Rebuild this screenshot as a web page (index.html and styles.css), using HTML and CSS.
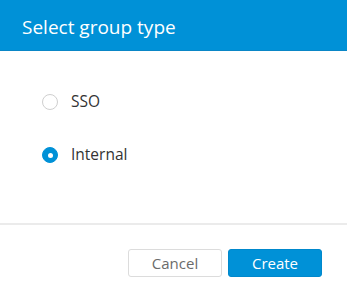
FILE: index.html
```html
<!DOCTYPE html>
<html>
  <head>
    <title>Select group type</title>
    <link rel="stylesheet" href="styles.css">
  </head>
  <body>
    <div class="dialog">
      <div class="header">
        <h1>Select group type</h1>
      </div>
      <div class="options">
        <label class="option">
          <span class="radio"></span>
          <span class="label">SSO</span>
        </label>
        <label class="option">
          <span class="radio checked"></span>
          <span class="label">Internal</span>
        </label>
      </div>
      <div class="footer">
        <button class="cancel">Cancel</button>
        <button class="create">Create</button>
      </div>
    </div>
  </body>
</html>
```

FILE: styles.css
```css
* {
  box-sizing: border-box;
  margin: 0;
  padding: 0;
}

body {
  width: 347px;
  height: 295px;
  background: #fff;
  font-family: "Open Sans", "Noto Sans", sans-serif;
  color: #333;
}

.dialog {
  display: flex;
  flex-direction: column;
  height: 100%;
}

.header {
  height: 51px;
  background: #0091d7;
  border-bottom: 1px solid #0a86c6;
  display: flex;
  align-items: center;
  padding-left: 22px;
}

.header h1 {
  color: #fff;
  font-size: 19px;
  font-weight: 400;
  padding-top: 3px;
}

.options {
  height: 174px;
  border-bottom: 2px solid #ebebeb;
  padding: 43px 0 0 42px;
  display: flex;
  flex-direction: column;
  gap: 37px;
}

.option {
  display: flex;
  align-items: center;
  gap: 13px;
  height: 16px;
}

.radio {
  width: 16px;
  height: 16px;
  border-radius: 50%;
  border: 1.5px solid #cfcfcf;
  display: flex;
  align-items: center;
  justify-content: center;
}

.radio.checked {
  background: #0091d7;
  border-color: #0091d7;
}

.radio.checked::after {
  content: "";
  width: 5px;
  height: 5px;
  border-radius: 50%;
  background: #fff;
}

.label {
  font-size: 15.5px;
  color: #333;
  padding-bottom: 3px;
}

.footer {
  display: flex;
  justify-content: flex-end;
  gap: 6px;
  padding: 24px 25px 0 0;
}

button {
  width: 94px;
  height: 28px;
  border-radius: 3px;
  font-family: "Open Sans", "Noto Sans", sans-serif;
  font-size: 15px;
  padding-bottom: 1px;
}

.cancel {
  background: #fff;
  border: 1px solid #dcdcdc;
  color: #6b6b6b;
}

.create {
  background: #0091d7;
  border: 1px solid #0088cc;
  color: #fff;
}
```
